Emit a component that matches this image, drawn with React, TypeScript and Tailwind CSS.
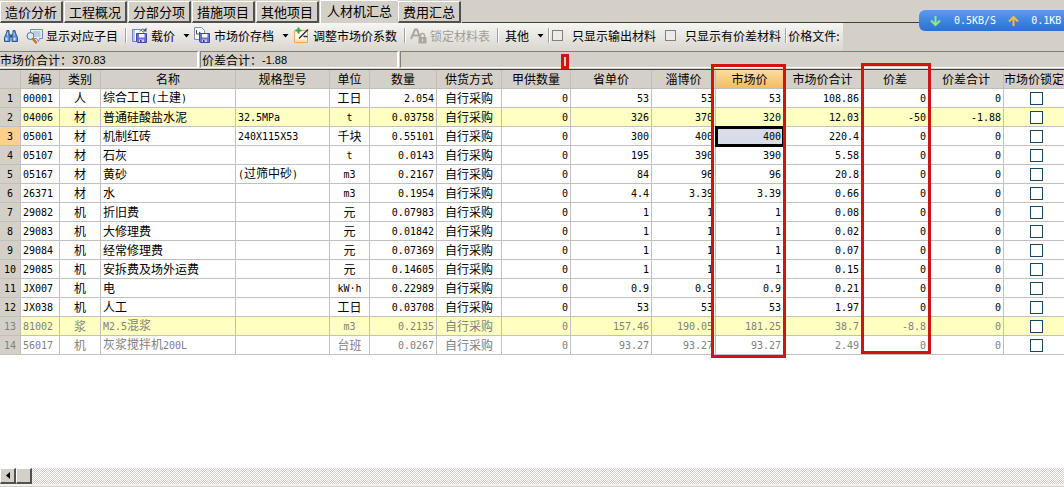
import { Fragment } from 'react'
import type { ReactNode } from 'react'
import clsx from 'clsx'

const TABS = ['造价分析', '工程概况', '分部分项', '措施项目', '其他项目', '人材机汇总', '费用汇总']
const ACTIVE_TAB = '人材机汇总'

type Align = 'left' | 'center' | 'right'

interface Column {
  title: string
  width: string
  align: Align
}

const COLUMNS: Column[] = [
  { title: '编码', width: 'w-[39px]', align: 'left' },
  { title: '类别', width: 'w-[41px]', align: 'center' },
  { title: '名称', width: 'w-[135px]', align: 'left' },
  { title: '规格型号', width: 'w-[94px]', align: 'left' },
  { title: '单位', width: 'w-[40px]', align: 'center' },
  { title: '数量', width: 'w-[67px]', align: 'right' },
  { title: '供货方式', width: 'w-[65px]', align: 'center' },
  { title: '甲供数量', width: 'w-[69px]', align: 'right' },
  { title: '省单价', width: 'w-[81px]', align: 'right' },
  { title: '淄博价', width: 'w-[64px]', align: 'right' },
  { title: '市场价', width: 'w-[68px]', align: 'right' },
  { title: '市场价合计', width: 'w-[78px]', align: 'right' },
  { title: '价差', width: 'w-[67px]', align: 'right' },
  { title: '价差合计', width: 'w-[75px]', align: 'right' },
]

const PRICE_COL = 10
const SELECTED_ROW = 2

const ROWS: string[][] = [
  ['00001', '人', '综合工日(土建)', '', '工日', '2.054', '自行采购', '0', '53', '53', '53', '108.86', '0', '0'],
  ['04006', '材', '普通硅酸盐水泥', '32.5MPa', 't', '0.03758', '自行采购', '0', '326', '370', '320', '12.03', '-50', '-1.88'],
  ['05001', '材', '机制红砖', '240X115X53', '千块', '0.55101', '自行采购', '0', '300', '400', '400', '220.4', '0', '0'],
  ['05107', '材', '石灰', '', 't', '0.0143', '自行采购', '0', '195', '390', '390', '5.58', '0', '0'],
  ['05167', '材', '黄砂', '(过筛中砂)', 'm3', '0.2167', '自行采购', '0', '84', '96', '96', '20.8', '0', '0'],
  ['26371', '材', '水', '', 'm3', '0.1954', '自行采购', '0', '4.4', '3.39', '3.39', '0.66', '0', '0'],
  ['29082', '机', '折旧费', '', '元', '0.07983', '自行采购', '0', '1', '1', '1', '0.08', '0', '0'],
  ['29083', '机', '大修理费', '', '元', '0.01842', '自行采购', '0', '1', '1', '1', '0.02', '0', '0'],
  ['29084', '机', '经常修理费', '', '元', '0.07369', '自行采购', '0', '1', '1', '1', '0.07', '0', '0'],
  ['29085', '机', '安拆费及场外运费', '', '元', '0.14605', '自行采购', '0', '1', '1', '1', '0.15', '0', '0'],
  ['JX007', '机', '电', '', 'kW·h', '0.22989', '自行采购', '0', '0.9', '0.9', '0.9', '0.21', '0', '0'],
  ['JX038', '机', '人工', '', '工日', '0.03708', '自行采购', '0', '53', '53', '53', '1.97', '0', '0'],
  ['81002', '浆', 'M2.5混浆', '', 'm3', '0.2135', '自行采购', '0', '157.46', '190.05', '181.25', '38.7', '-8.8', '0'],
  ['56017', '机', '灰浆搅拌机200L', '', '台班', '0.0267', '自行采购', '0', '93.27', '93.27', '93.27', '2.49', '0', '0'],
]

const HIGHLIGHTED = [1, 12]
const DIMMED = [12, 13]

// Latin runs are set in a half-width face, so that two of them take one Chinese character
function Mixed({ text }: { text: string }) {
  return (
    <>
      {text.split(/([\x20-\x7e·]+)/).map((part, i) =>
        i % 2 === 1 ? (
          <span key={i} className="font-['DejaVu_Sans_Mono',monospace] text-[10px]">{part}</span>
        ) : (
          <Fragment key={i}>{part}</Fragment>
        )
      )}
    </>
  )
}

function Caret() {
  return (
    <svg width="7" height="4" viewBox="0 0 7 4" className="shrink-0">
      <path d="M0.5 0h6L3.5 3.5z" fill="#000" />
    </svg>
  )
}

function Separator() {
  return <div className="h-[15px] w-[2px] shrink-0 border-l border-[#a5a299] bg-white" />
}

function BinocularsIcon() {
  return (
    <svg width="16" height="16" viewBox="0 0 16 16" className="shrink-0">
      <path d="M4 2.500h2v2.500L7 7.500v6H1.500V9.500L3.500 5z" fill="#5c8fd6" stroke="#2f5592" />
      <path d="M12 2.500h-2v2.500L9 7.500v6h5.500V9.500L12.500 5z" fill="#5c8fd6" stroke="#2f5592" />
      <path d="M2.500 9.500h2v3h-2zM10.500 9.500h2v3h-2z" fill="#d3e4fa" />
      <path d="M4.500 4.500v3M11 4.500v3" stroke="#b7d2f5" />
      <path d="M7 6.500h2v3H7z" fill="#2f5592" />
    </svg>
  )
}

function PreviewIcon() {
  return (
    <svg width="17" height="16" viewBox="0 0 17 16" className="shrink-0">
      <path d="M4.500 1.500h12v9h-3l-1 3-2-3h-6z" fill="#e4eefb" stroke="#6d8db8" />
      <path d="M7 4h7.500M7 6h7.500M9 8h5.500" stroke="#93a9c9" />
      <circle cx="4.500" cy="8" r="3.500" fill="#d5ecfa" stroke="#5b6f8a" />
      <path d="M7 11l3 3.500" stroke="#c9742a" strokeWidth="2.500" strokeLinecap="round" />
    </svg>
  )
}

function Disk() {
  return (
    <>
      <path d="M5.500 6.500h10v9h-9l-1-1z" fill="#6c70cf" stroke="#4448a0" />
      <path d="M8 7h5.500v3.500H8z" fill="#f4f5ff" />
      <path d="M8 12.500h5V15H8z" fill="#c9cdf2" />
      <path d="M9 13h1.500v2H9z" fill="#33378f" />
    </>
  )
}

function LoadPriceIcon() {
  return (
    <svg width="17" height="17" viewBox="0 0 17 17" className="shrink-0">
      <path d="M1.500 2.500h8l3 3v9h-11z" fill="#f7faff" stroke="#6b86c2" />
      <path d="M2 3h2v11H2z" fill="#b4c9f0" />
      <path d="M9 4.500c1-3 4-3 5.500-.5" fill="none" stroke="#4c5670" />
      <path d="M15.500 0.500v4h-4z" fill="#4c5670" />
      <Disk />
    </svg>
  )
}

function ArchiveIcon() {
  return (
    <svg width="17" height="17" viewBox="0 0 17 17" className="shrink-0">
      <path d="M0.500 0.500h7l3 3v9h-10z" fill="#f7faff" stroke="#7b8fba" />
      <path d="M2.500 3v4h3" fill="none" stroke="#3c4c78" />
      <path d="M5 4.500v5L8 7z" fill="#3c4c78" />
      <Disk />
    </svg>
  )
}

function AdjustIcon() {
  return (
    <svg width="17" height="17" viewBox="0 0 17 17" className="shrink-0">
      <path d="M1.500 3.500h13v12h-13z" fill="#fffaf0" stroke="#e8a95c" />
      <path d="M2 12.500h12V15H2z" fill="#fbdcae" />
      <path d="M5.500 0.500v6M2.500 3.500h6" stroke="#3d9e46" strokeWidth="2" />
      <path d="M15 2.500L6 11.500" stroke="#2d2d2d" strokeWidth="1.500" />
      <path d="M10.500 9.500h4" stroke="#2d2d2d" strokeWidth="1.500" />
    </svg>
  )
}

function LockTableIcon() {
  return (
    <svg width="17" height="16" viewBox="0 0 17 16" className="shrink-0">
      <path d="M1 11L5 1.500h2L10.500 11M3 7.500h6" fill="none" stroke="#aaa79f" strokeWidth="2" />
      <path d="M10.500 9V7.500a2 2 0 0 1 4 0V9" fill="none" stroke="#aaa79f" strokeWidth="1.300" />
      <path d="M8.500 9h8v6.500h-8z" fill="#aaa79f" />
      <path d="M12 11h1v2.500h-1z" fill="#e8e6e1" />
    </svg>
  )
}

function ToolButton({ icon, label, caret, disabled }: { icon?: ReactNode; label: string; caret?: boolean; disabled?: boolean }) {
  return (
    <button disabled={disabled} className={clsx('flex shrink-0 items-center gap-[3px]', disabled && 'text-[#a09d95]')}>
      {icon}
      <span>{label}</span>
      {caret && <span className="flex w-3 justify-end"><Caret /></span>}
    </button>
  )
}

function ToolCheck({ label }: { label: string }) {
  return (
    <label className="flex shrink-0 items-center gap-[9px]">
      <input type="checkbox" className="size-[11px] appearance-none border border-[#808080] bg-[#ecebe7]" />
      {label}
    </label>
  )
}

function StatusCell({ label, value, className }: { label?: string; value?: string; className: string }) {
  return (
    <div className={clsx('flex h-[17px] items-center border-t border-b border-t-[#808080] border-b-white', className)}>
      {label}
      <span className="font-['Liberation_Sans',sans-serif] text-[11px]">{value}</span>
    </div>
  )
}

function SpeedWidget() {
  return (
    <div className="absolute top-[10px] right-0 z-20 flex h-[21px] w-[145px] items-center rounded-l-md bg-linear-to-b from-[#5c9cec] via-[#3f85e2] to-[#2b70d6] pl-[10px] font-['DejaVu_Sans_Mono',monospace] text-[10px] whitespace-nowrap text-white">
      <svg width="13" height="12" viewBox="0 0 13 12" className="shrink-0">
        <path d="M6.500 1v9M2 5.500l4.500 4.500L11 5.500" fill="none" stroke="#8fe88a" strokeWidth="2" />
      </svg>
      <span className="ml-3">0.5KB/S</span>
      <svg width="13" height="12" viewBox="0 0 13 12" className="ml-[11px] shrink-0">
        <path d="M6.500 11V2M2 6.500L6.500 2 11 6.500" fill="none" stroke="#f5b93c" strokeWidth="2" />
      </svg>
      <span className="ml-[11px]">0.1KB</span>
    </div>
  )
}

function MaterialTable() {
  return (
    <table className="w-full table-fixed border-separate border-spacing-0 border-t border-[#404040]">
      <thead>
        <tr className="h-[19px] bg-[#d4d0c8] whitespace-nowrap">
          <th className="w-[21px] border-r border-b border-[#c0bdb5] p-0" />
          {COLUMNS.map((col, i) => (
            <th
              key={col.title}
              className={clsx(
                'border-r border-b border-[#c0bdb5] p-0 text-center font-normal',
                col.width,
                i === PRICE_COL && 'bg-linear-to-b from-[#fbdca0] to-[#f3bd62]'
              )}
            >
              {col.title}
            </th>
          ))}
          <th className="border-b border-[#c0bdb5] p-0 text-left font-normal">市场价锁定</th>
        </tr>
      </thead>
      <tbody>
        {ROWS.map((row, r) => (
          <tr
            key={row[0]}
            className={clsx(
              'h-[19px]',
              HIGHLIGHTED.includes(r) ? 'bg-[#ffffc1]' : 'bg-white',
              DIMMED.includes(r) && 'text-[#808080]'
            )}
          >
            <td className={clsx('border-r border-b border-[#c0c0c0] p-0 text-center', r === SELECTED_ROW ? 'bg-[#fbd08c]' : 'bg-[#d4d0c8]')}>
              <Mixed text={String(r + 1)} />
            </td>
            {row.map((cell, c) => (
              <td
                key={c}
                className={clsx(
                  'border-r border-b border-[#c0c0c0] p-0 whitespace-nowrap',
                  COLUMNS[c].align === 'left' && 'pl-[2px] text-left',
                  COLUMNS[c].align === 'center' && 'text-center',
                  COLUMNS[c].align === 'right' && 'pr-[2px] text-right',
                  r === SELECTED_ROW && c === PRICE_COL && 'bg-[#d8dce8] outline-3 -outline-offset-2 outline-black'
                )}
              >
                <Mixed text={cell} />
              </td>
            ))}
            <td className="border-b border-[#c0c0c0] p-0 pl-1">
              <input
                type="checkbox"
                aria-label={`市场价锁定 ${row[0]}`}
                className="mx-auto block size-[13px] appearance-none border border-[#1c4560] bg-white"
              />
            </td>
          </tr>
        ))}
      </tbody>
    </table>
  )
}

export default function App() {
  return (
    <div className="relative flex min-h-screen flex-col overflow-hidden bg-[#d4d0c8] font-['Noto_Sans_CJK_SC',sans-serif] text-[12px] leading-[16px] text-black">
      {/* Tabs */}
      <div className="flex h-[23px] items-end whitespace-nowrap">
        {TABS.map((tab) =>
          tab === ACTIVE_TAB ? (
            <button key={tab} className="h-[23px] border-t border-l border-white px-[6px] pb-[2px] text-[13px]">
              {tab}
            </button>
          ) : (
            <button
              key={tab}
              className="mr-px h-[22px] border-t border-r-2 border-b-2 border-l border-white border-r-[#505050] border-b-[#505050] px-[4px] text-[13px]"
            >
              {tab}
            </button>
          )
        )}
        <div className="flex-1 self-stretch border-b border-[#404040]" />
      </div>

      {/* Toolbar */}
      <div className="flex h-[28px]">
        <div className="flex items-center bg-linear-to-b from-[#f6f5f3] to-[#d9d6ce] pr-1 pb-[3px] pl-[3px] whitespace-nowrap">
          <button aria-label="查找" className="mr-[7px]"><BinocularsIcon /></button>
          <ToolButton icon={<PreviewIcon />} label="显示对应子目" />
          <div className="mr-1 ml-[7px]"><Separator /></div>
          <ToolButton icon={<LoadPriceIcon />} label="载价" caret />
          <div className="w-1" />
          <ToolButton icon={<ArchiveIcon />} label="市场价存档" caret />
          <div className="w-1" />
          <ToolButton icon={<AdjustIcon />} label="调整市场价系数" />
          <div className="mr-1 ml-[7px]"><Separator /></div>
          <ToolButton icon={<LockTableIcon />} label="锁定材料表" disabled />
          <div className="mr-[6px] ml-[7px]"><Separator /></div>
          <ToolButton label="其他" caret />
          <div className="mr-[2px] ml-1"><Separator /></div>
          <ToolCheck label="只显示输出材料" />
          <div className="w-[9px]" />
          <ToolCheck label="只显示有价差材料" />
          <div className="mr-px ml-1"><Separator /></div>
          <span>价格文件:</span>
        </div>
      </div>

      {/* Totals */}
      <div className="flex h-[18px] whitespace-nowrap">
        <StatusCell label="市场价合计：" value="370.83" className="w-[199px] border-r-2 border-r-white" />
        <StatusCell label="价差合计：" value="-1.88" className="ml-px w-[199px] border-r-2 border-l border-r-white border-l-[#808080] pl-px" />
        <StatusCell className="ml-px flex-1 border-l border-l-[#808080]" />
      </div>

      <div className="flex-1 bg-white">
        <MaterialTable />
      </div>

      {/* Horizontal scrollbar */}
      <div className="flex h-[16px] bg-[repeating-conic-gradient(#d4d0c8_0_25%,#ffffff_0_50%)] bg-[length:2px_2px]">
        <button
          aria-label="向左滚动"
          className="flex w-4 items-center justify-center border-t border-r-2 border-b-2 border-l border-white border-r-[#505050] border-b-[#505050] bg-[#d4d0c8]"
        >
          <svg width="4" height="7" viewBox="0 0 4 7">
            <path d="M4 0v7L0 3.500z" fill="#000" />
          </svg>
        </button>
        <div className="w-4 border-t border-r-2 border-b-2 border-l border-white border-r-[#505050] border-b-[#505050] bg-[#d4d0c8]" />
      </div>
      <div className="h-[3px] border-b border-[#d4d0c8] bg-[#f4f2ee]" />

      {/* Red marks over the price and difference columns */}
      <div className="pointer-events-none absolute top-[54px] left-[561px] z-10 h-[15px] w-[8px] border-3 border-[#d01414]" />
      <div className="pointer-events-none absolute top-[64px] left-[711px] z-10 h-[294px] w-[75px] border-3 border-[#d01414]" />
      <div className="pointer-events-none absolute top-[63px] left-[861px] z-10 h-[291px] w-[70px] border-3 border-[#d01414]" />

      <SpeedWidget />
    </div>
  )
}
